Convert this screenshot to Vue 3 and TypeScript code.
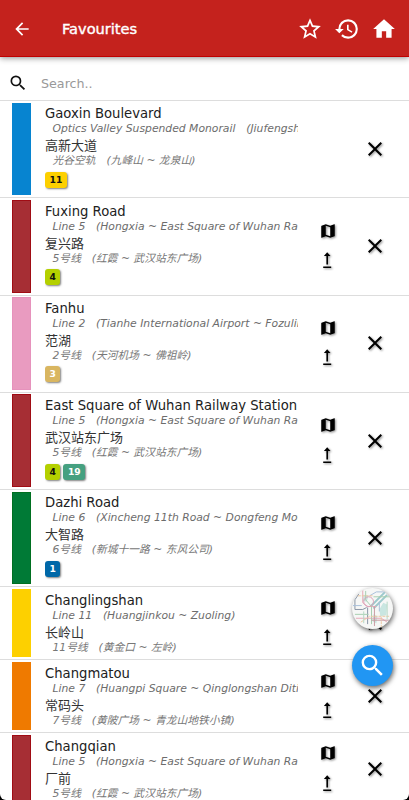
<script setup lang="ts">
interface Transfer {
  label: string
  bg: string
  fg: string
}
interface Station {
  name: string
  line: string
  zhName: string
  zhLine: string
  color: string
  edge: string
  located: boolean
  transfers: Transfer[]
}

const ink = '#111'
const white = '#fff'
const line5 = {
  line: 'Line 5\u2003(Hongxia ~ East Square of Wuhan Railway Station)',
  zhLine: '5号线\u2003(红霞 ~ 武汉站东广场)',
  color: '#a62e34',
  edge: '#a00c14',
  located: true,
}

const stations: Station[] = [
  {
    name: 'Gaoxin Boulevard',
    line: 'Optics Valley Suspended Monorail\u2003(Jiufengshan ~ Longquanshan)',
    zhName: '高新大道',
    zhLine: '光谷空轨\u2003(九峰山 ~ 龙泉山)',
    color: '#0784d0',
    edge: '#0784d0',
    located: false,
    transfers: [{ label: '11', bg: '#fdd000', fg: ink }],
  },
  { ...line5, name: 'Fuxing Road', zhName: '复兴路', transfers: [{ label: '4', bg: '#b4d000', fg: ink }] },
  {
    name: 'Fanhu',
    line: 'Line 2\u2003(Tianhe International Airport ~ Fozuling)',
    zhName: '范湖',
    zhLine: '2号线\u2003(天河机场 ~ 佛祖岭)',
    color: '#e99bc0',
    edge: '#e692bc',
    located: true,
    transfers: [{ label: '3', bg: '#d9b660', fg: white }],
  },
  {
    ...line5,
    name: 'East Square of Wuhan Railway Station',
    zhName: '武汉站东广场',
    transfers: [
      { label: '4', bg: '#b4d000', fg: ink },
      { label: '19', bg: '#45a080', fg: white },
    ],
  },
  {
    name: 'Dazhi Road',
    line: 'Line 6\u2003(Xincheng 11th Road ~ Dongfeng Motor Corporation)',
    zhName: '大智路',
    zhLine: '6号线\u2003(新城十一路 ~ 东风公司)',
    color: '#007a36',
    edge: '#006f20',
    located: true,
    transfers: [{ label: '1', bg: '#0068a8', fg: white }],
  },
  {
    name: 'Changlingshan',
    line: 'Line 11\u2003(Huangjinkou ~ Zuoling)',
    zhName: '长岭山',
    zhLine: '11号线\u2003(黄金口 ~ 左岭)',
    color: '#fdd000',
    edge: '#fdd000',
    located: true,
    transfers: [],
  },
  {
    name: 'Changmatou',
    line: 'Line 7\u2003(Huangpi Square ~ Qinglongshan Ditiexiaozhen)',
    zhName: '常码头',
    zhLine: '7号线\u2003(黄陂广场 ~ 青龙山地铁小镇)',
    color: '#ef7a00',
    edge: '#ef7a00',
    located: true,
    transfers: [],
  },
  { ...line5, name: 'Changqian', zhName: '厂前', transfers: [] },
]
</script>

<template>
  <div class="screen">
    <header class="bar">
      <svg class="back" viewBox="0 0 24 24"><path d="M20 11H7.83l5.59-5.59L12 4l-8 8 8 8 1.41-1.41L7.83 13H20v-2z" /></svg>
      <h1>Favourites</h1>
      <nav>
        <svg viewBox="0 0 24 24"><path d="M22 9.24l-7.19-.62L12 2 9.19 8.63 2 9.24l5.46 4.73L5.82 21 12 17.27 18.18 21l-1.63-7.03L22 9.24zM12 15.4l-3.76 2.27 1-4.28-3.32-2.88 4.38-.38L12 6.1l1.71 4.04 4.38.38-3.32 2.88 1 4.28L12 15.4z" /></svg>
        <svg viewBox="0 0 24 24"><path d="M13 3a9 9 0 0 0-9 9H1l3.89 3.89.07.14L9 12H6c0-3.87 3.13-7 7-7s7 3.13 7 7-3.13 7-7 7c-1.93 0-3.68-.79-4.94-2.06l-1.42 1.42A8.954 8.954 0 0 0 13 21a9 9 0 0 0 0-18zm-1 5v5l4.28 2.54.72-1.21-3.5-2.08V8H12z" /></svg>
        <svg viewBox="0 0 24 24"><path d="M10 20v-6h4v6h5v-8h3L12 3 2 12h3v8z" /></svg>
      </nav>
    </header>

    <label class="search">
      <svg viewBox="0 0 24 24"><path d="M15.5 14h-.79l-.28-.27A6.471 6.471 0 0 0 16 9.5 6.5 6.5 0 1 0 9.5 16c1.61 0 3.09-.59 4.23-1.57l.27.28v.79l5 4.99L20.49 19l-4.99-5zm-6 0C7.01 14 5 11.99 5 9.5S7.01 5 9.5 5 14 7.01 14 9.5 11.99 14 9.5 14z" /></svg>
      <input type="text" placeholder="Search.." />
    </label>

    <main>
      <article v-for="s in stations" :key="s.name" :class="{ tall: s.transfers.length }">
        <div class="stripe" :style="{ background: s.color, borderColor: s.edge }"></div>
        <div class="info">
          <div class="name">{{ s.name }}</div>
          <div class="line">{{ s.line }}</div>
          <div class="name zh">{{ s.zhName }}</div>
          <div class="line zh">{{ s.zhLine }}</div>
          <div v-if="s.transfers.length" class="badges">
            <span v-for="t in s.transfers" :key="t.label" :style="{ background: t.bg, color: t.fg }">{{ t.label }}</span>
          </div>
        </div>
        <div class="tools">
          <template v-if="s.located">
            <svg viewBox="0 0 24 24"><path d="M20.5 3l-.16.03L15 5.1 9 3 3.36 4.9c-.21.07-.36.25-.36.48V20.5c0 .28.22.5.5.5l.16-.03L9 18.9l6 2.1 5.64-1.9c.21-.07.36-.25.36-.48V3.5c0-.28-.22-.5-.5-.5zM15 19l-6-2.11V5l6 2.11V19z" /></svg>
            <svg viewBox="0 0 18 18"><path d="M7.4 13.4V5H4.9l3.3-3.7L11.5 5H9v8.4zM4.2 15.5h8V17h-8z" /></svg>
          </template>
        </div>
        <svg class="remove" viewBox="0 0 24 24"><path d="M19 6.41L17.59 5 12 10.59 6.41 5 5 6.41 10.59 12 5 17.59 6.41 19 12 13.41 17.59 19 19 17.59 13.41 12z" /></svg>
      </article>
    </main>

    <div class="fabs">
      <div class="fab map">
        <svg viewBox="0 0 42 42">
          <path class="lake" d="M28 22l4-7 4 2-1 11-6 1zM12 7l5 1-2 6-4-1zM22 27l4 2-1 7-4-2z" />
          <path d="M19 19L34 4M22 21l14-14" stroke="#9cc9cc" stroke-width="2" />
          <path d="M3 12v10h8l4-2M16 20v17M7 6l-4 6" stroke="#8792a3" />
          <path d="M11 2v13l5 4h9M4 31h26l6 4" stroke="#e6a7b6" />
          <path d="M14 3v9l6 7v18M22 9h17M3 27h14" stroke="#a7cfb0" />
          <path d="M23 19v20M20 33h18" stroke="#c99aa2" />
          <path d="M1 18h9M18 8l7-4h9M28 14v10" stroke="#a9bfda" />
          <path d="M6 8h16M9 35l9-6h20M30 30v10" stroke="#ecc7a0" stroke-dasharray="3 1" />
          <path d="M36 14v18M12 24v12" stroke="#b5d8c4" />
          <circle cx="17" cy="14" r="5" stroke="#dba0b8" />
        </svg>
      </div>
      <div class="fab find">
        <svg viewBox="0 0 24 24"><path d="M15.5 14h-.79l-.28-.27A6.471 6.471 0 0 0 16 9.5 6.5 6.5 0 1 0 9.5 16c1.61 0 3.09-.59 4.23-1.57l.27.28v.79l5 4.99L20.49 19l-4.99-5zm-6 0C7.01 14 5 11.99 5 9.5S7.01 5 9.5 5 14 7.01 14 9.5 11.99 14 9.5 14z" /></svg>
      </div>
    </div>
  </div>
</template>

<style>
body {
  background: #000;
}
</style>

<style scoped>
.screen {
  position: relative;
  height: 800px;
  overflow: hidden;
  display: flex;
  flex-direction: column;
  background: #fff;
  border-radius: 0 0 6px 6px;
  font-family: 'DejaVu Sans', 'Noto Sans CJK SC', sans-serif;
  color: #212121;
}
svg {
  display: block;
  fill: currentColor;
  flex: none;
}
.bar {
  flex: none;
  height: 57px;
  box-sizing: border-box;
  display: flex;
  align-items: center;
  padding: 1px 12px 0 12px;
  background: #c4221d;
  border-bottom: 1px solid #c00000;
  box-shadow: 0 1px 6px rgba(0, 0, 0, 0.45);
  color: #fff;
  z-index: 1;
}
.back {
  width: 20px;
  height: 20px;
  margin-top: 1px;
}
h1 {
  margin: 0 0 0 30px;
  flex: 1;
  font-size: 14.6px;
  font-weight: 400;
  -webkit-text-stroke: 0.4px #fff;
}
nav {
  display: flex;
  gap: 11px;
}
nav svg {
  width: 26px;
  height: 26px;
}
.search {
  flex: none;
  height: 43px;
  display: flex;
  align-items: center;
  padding: 9px 8px 0;
  box-sizing: border-box;
  color: #111;
}
.search svg {
  width: 20px;
  height: 20px;
}
.search input {
  flex: 1;
  border: 0;
  outline: 0;
  padding: 0;
  margin-left: 13px;
  font: 12.7px 'DejaVu Sans', sans-serif;
}
.search input::placeholder {
  color: #999;
}
main {
  flex: 1;
  overflow: hidden;
}
article {
  display: flex;
  height: 72.9px;
  box-sizing: border-box;
  border-top: 1px solid #ddd;
  padding: 1.5px 24px 2px 12px;
}
article.tall {
  height: 97.3px;
}
.stripe {
  width: 19px;
  box-sizing: border-box;
  border: 1px solid;
}
.info {
  width: 253px;
  margin-left: 14px;
  padding-top: 2.8px;
  white-space: nowrap;
  overflow: hidden;
}
.name {
  font-size: 13.2px;
  height: 17px;
  line-height: 17px;
}
.name.zh {
  font-size: 13px;
  color: #333;
}
.line {
  height: 15px;
  line-height: 13px;
  padding-left: 7.5px;
  font-size: 10.79px;
  font-style: italic;
  color: #6c6c6c;
}
.line.zh {
  line-height: 14px;
  color: #777;
}
.badges {
  display: flex;
  gap: 3px;
  padding-top: 2.5px;
}
.badges span {
  height: 16px;
  box-sizing: border-box;
  padding: 0 4.5px;
  border-radius: 3px;
  font-size: 9.2px;
  font-weight: 700;
  line-height: 16px;
  box-shadow: 1px 1px 2px rgba(0, 0, 0, 0.5);
}
.tools {
  width: 18px;
  margin-left: 21px;
  padding-bottom: 1.5px;
  display: flex;
  flex-direction: column;
  gap: 11.5px;
  justify-content: center;
}
.tools svg,
.remove {
  color: #000;
  filter: drop-shadow(1px 1px 1px rgba(0, 0, 0, 0.45));
}
.tools svg {
  width: 18px;
  height: 18px;
}
.remove {
  width: 24px;
  height: 24px;
  margin-left: auto;
  margin-right: -2px;
  align-self: center;
}
.fabs {
  position: absolute;
  right: 16px;
  top: 588px;
  display: flex;
  flex-direction: column;
  gap: 16px;
}
.fab {
  width: 41px;
  height: 41px;
  border-radius: 50%;
  box-shadow: 1px 2px 5px rgba(0, 0, 0, 0.6);
  display: grid;
  place-items: center;
  overflow: hidden;
}
.map {
  background: #f6f7f6;
}
.map svg {
  width: 41px;
  height: 41px;
  fill: none;
}
.lake {
  fill: #c9e6e1;
}
.find {
  background: #2196f3;
  color: #fff;
}
.find svg {
  width: 29px;
  height: 29px;
}
</style>
